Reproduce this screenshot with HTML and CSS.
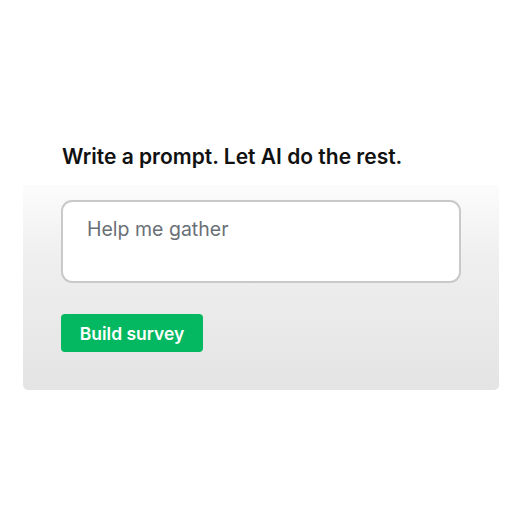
FILE: index.html
```html
<!DOCTYPE html>
<html>
<head>
<meta charset="utf-8">
<link rel="stylesheet" href="styles.css">
</head>
<body>
<main class="page">
  <h1 class="title">Write a prompt. Let AI do the rest.</h1>
  <section class="panel">
    <div class="prompt">Help me gather</div>
    <button class="build">Build survey</button>
  </section>
</main>
</body>
</html>
```
FILE: styles.css
```css
* { box-sizing: border-box; }
html, body { margin: 0; padding: 0; background: #fff; }
body { font-family: Inter, "Open Sans", sans-serif; width: 520px; height: 520px; }
.page { padding-top: 144px; }
.title {
  margin: 0 0 15px 62px;
  font-size: 21px;
  line-height: 26px;
  font-weight: 600;
  color: #111;
  letter-spacing: 0;
}
.panel {
  margin-left: 23px;
  width: 476px;
  padding: 15px 38px 38px 38px;
  background: linear-gradient(#fcfcfc 0%, #efefef 35%, #e4e4e4 100%);
  border-radius: 2px 2px 5px 5px;
  display: flex;
  flex-direction: column;
  align-items: flex-start;
  gap: 31px;
}
.prompt {
  width: 400px;
  height: 83px;
  background: #fff;
  border: 2px solid #c9c9c9;
  border-radius: 11px;
  padding: 15px 24px;
  font-size: 19.5px;
  line-height: 24px;
  color: #6a7077;
}
.build {
  width: 142px;
  height: 38px;
  border: none;
  border-radius: 4px;
  background: #04b861;
  color: #fff;
  font-family: inherit;
  font-size: 17.5px;
  font-weight: 600;
  padding: 0;
}
```
